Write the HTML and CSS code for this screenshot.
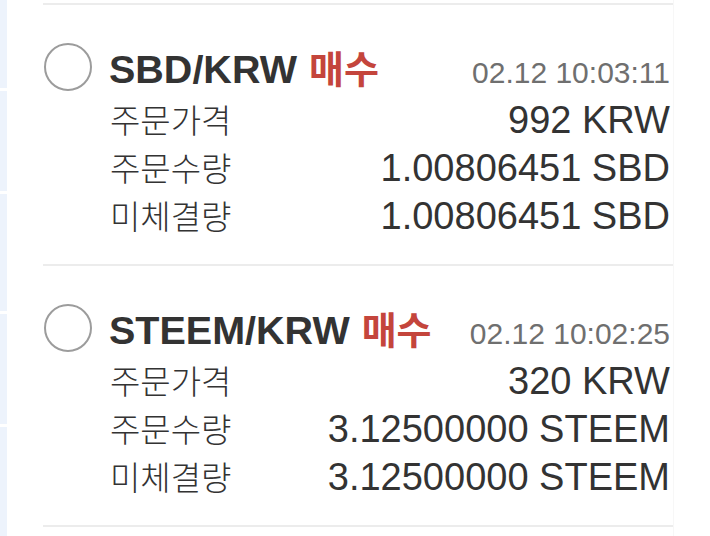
FILE: index.html
```html
<!DOCTYPE html>
<html lang="ko">
<head>
  <meta charset="UTF-8">
  <meta name="viewport" content="width=device-width, initial-scale=1.0">
  <title>주문 내역</title>
  <link rel="stylesheet" href="styles.css">
</head>
<body>
  <div class="rail">
    <div class="rail-seg s1"></div>
    <div class="rail-seg s2"></div>
    <div class="rail-seg s3"></div>
    <div class="rail-seg s4"></div>
    <div class="rail-seg s5"></div>
  </div>

  <main class="order-list">
    <div class="order">
      <div class="order-head">
        <span class="check"></span>
        <div class="order-title">
          <span class="pair">SBD/KRW</span>
          <span class="side">매수</span>
        </div>
        <span class="time">02.12 10:03:11</span>
      </div>
      <div class="order-row"><span class="label">주문가격</span><span class="value">992 KRW</span></div>
      <div class="order-row"><span class="label">주문수량</span><span class="value">1.00806451 SBD</span></div>
      <div class="order-row"><span class="label">미체결량</span><span class="value">1.00806451 SBD</span></div>
    </div>

    <div class="order">
      <div class="order-head">
        <span class="check"></span>
        <div class="order-title">
          <span class="pair">STEEM/KRW</span>
          <span class="side">매수</span>
        </div>
        <span class="time">02.12 10:02:25</span>
      </div>
      <div class="order-row"><span class="label">주문가격</span><span class="value">320 KRW</span></div>
      <div class="order-row"><span class="label">주문수량</span><span class="value">3.12500000 STEEM</span></div>
      <div class="order-row"><span class="label">미체결량</span><span class="value">3.12500000 STEEM</span></div>
    </div>
    <div class="order last"></div>
  </main>
</body>
</html>
```

FILE: styles.css
```css
body {
  margin: 0;
  background: #ffffff;
  color: #333333;
  font-family: "Liberation Sans", "Noto Sans CJK KR", sans-serif;
  display: flex;
  height: 536px;
  overflow: hidden;
}

.rail {
  width: 7px;
  display: flex;
  flex-direction: column;
  gap: 3px;
}

.rail-seg {
  background: #edf3fc;
}

.s1 { height: 88px; }
.s2 { height: 100px; }
.s3 { height: 117px; }
.s4 { height: 110px; }
.s5 { flex-grow: 1; }

.order-list {
  margin-left: 36px;
  width: 630px;
  padding-top: 3px;
  border-right: 1px solid #f7f7f7;
}

.order {
  border-top: 2px solid #ececec;
  padding: 38px 0 25px;
}

.order.last {
  padding: 0;
}

.order-head {
  display: flex;
  align-items: baseline;
  height: 48px;
  line-height: 48px;
}

.check {
  align-self: center;
  width: 44px;
  height: 44px;
  margin-left: 1px;
  border: 2px solid #9c9c9c;
  border-radius: 50%;
  flex-shrink: 0;
}

.order-title {
  margin-left: 17px;
  flex-grow: 1;
  font-size: 39.5px;
  font-weight: bold;
  color: #333333;
  white-space: nowrap;
}

.side {
  color: #c4453c;
  font-family: "Noto Sans CJK KR", sans-serif;
  font-size: 38px;
  margin-left: 1px;
}

.time {
  font-size: 30px;
  color: #6f6f6f;
  margin-right: 3px;
}

.order-row {
  display: flex;
  justify-content: space-between;
  align-items: baseline;
  height: 48px;
  line-height: 48px;
  margin-left: 67px;
  margin-right: 3px;
}

.order-head + .order-row {
  margin-top: 4px;
}

.label {
  font-family: "Noto Sans CJK KR", sans-serif;
  font-size: 33px;
  font-weight: 300;
  color: #333333;
}

.value {
  font-size: 38px;
  color: #333333;
}
```
